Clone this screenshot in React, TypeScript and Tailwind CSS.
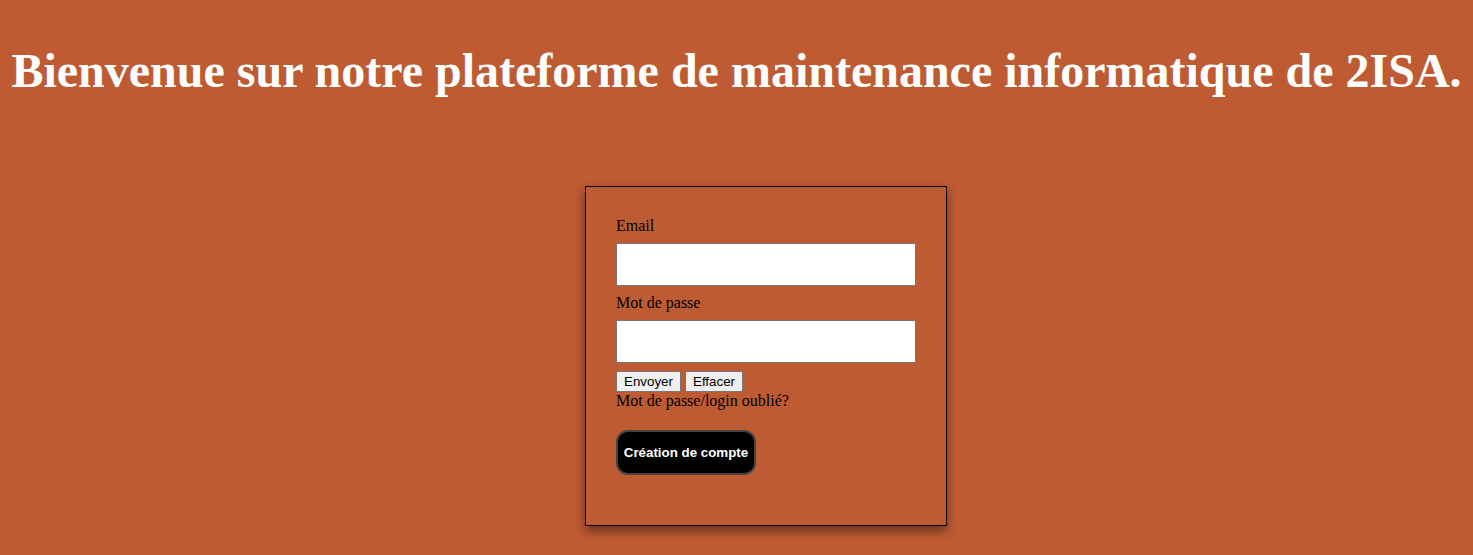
export default function App() {
  return (
    <main className="min-h-screen bg-[#be5b32] font-['Liberation_Serif',serif] text-black">
      <h1 className="pt-[43px] text-center text-[48px] font-bold leading-[55px] text-white">
        Bienvenue sur notre plateforme de maintenance informatique de 2ISA.
      </h1>

      {/* Login box */}
      <div className="ml-[585px] mt-[88px] w-[362px] border border-black px-[30px] pt-[30px] pb-[50px] shadow-[0_5px_10px_rgba(0,0,0,0.45)]">
        <form className="flex flex-col">
          <label className="text-[16px] leading-[18px]">Email</label>
          <input type="email" className="mt-2 h-[43px] w-[300px] border border-[#767676] bg-white" />
          <label className="mt-2 text-[16px] leading-[18px]">Mot de passe</label>
          <input type="password" className="mt-2 h-[43px] w-[300px] border border-[#767676] bg-white" />
          <div className="mt-2 flex gap-1 font-['Liberation_Sans',sans-serif] text-[13.33px]">
            <button type="button" className="h-[21px] w-[65px] rounded-[2px] border border-[#767676] bg-[#efefef] leading-[15px]">
              Envoyer
            </button>
            <button type="button" className="h-[21px] w-[58px] rounded-[2px] border border-[#767676] bg-[#efefef] leading-[15px]">
              Effacer
            </button>
          </div>
          <span className="text-[16px] leading-[18px]">Mot de passe/login oublié?</span>
          <div className="mt-5">
            <button
              type="button"
              className="h-[45px] w-[140px] whitespace-nowrap rounded-[12px] border-2 border-[#444] bg-black px-[4px] font-['Liberation_Sans',sans-serif] text-[13.33px] font-bold text-white"
            >
              Création de compte
            </button>
          </div>
        </form>
      </div>
    </main>
  );
}
